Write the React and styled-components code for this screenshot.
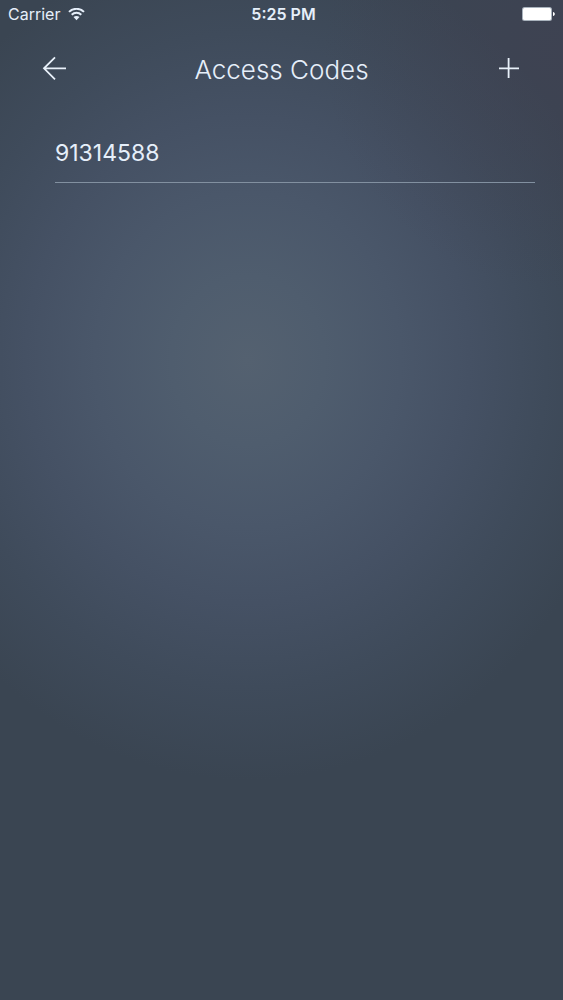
import React from "react";
import styled, { createGlobalStyle } from "styled-components";

const GlobalStyle = createGlobalStyle`
  *, *::before, *::after { box-sizing: border-box; }
  body { margin: 0; background: #3a4552; }
`;

const Screen = styled.div`
  min-height: 100vh;
  color: #e6effa;
  font-family: Inter, "Liberation Sans", sans-serif;
  background:
    radial-gradient(circle at 100% 5%, rgba(66, 64, 82, 0.5), rgba(66, 64, 82, 0) 240px),
    radial-gradient(ellipse 68% 42% at 44% 36%, #546170 0%, #4f5d6e 20%, #4a576a 40%, #455164 58%, #3f4b5b 78%, #3a4552 100%);
`;

const StatusBar = styled.div`
  display: grid;
  grid-template-columns: 1fr auto 1fr;
  align-items: center;
  height: 28px;
  padding: 0 8px;
  font-size: 16px;
  line-height: 20px;
`;

const Network = styled.div`
  display: flex;
  align-items: center;
  gap: 8px;
`;

const Time = styled.time`
  padding-left: 4px;
  font-weight: 600;
`;

const BatterySlot = styled.div`
  display: flex;
  justify-content: flex-end;
`;

const Icon = styled.svg`
  display: block;
  fill: none;
  stroke: currentColor;
  stroke-width: 2;
`;

const NavBar = styled.header`
  display: grid;
  grid-template-columns: 44px 1fr 44px;
  align-items: center;
  height: 80px;
  padding: 0 32px;
`;

const Title = styled.h1`
  margin: 0;
  padding-top: 4px;
  font-size: 26px;
  font-weight: 300;
  line-height: 32px;
  text-align: center;
`;

const IconButton = styled.button`
  display: grid;
  place-items: center;
  width: 44px;
  height: 44px;
  padding: 0;
  border: 0;
  background: none;
  color: #e9f1fa;
  cursor: pointer;
`;

const CodeList = styled.ul`
  margin: 0;
  padding: 16px 28px 0 55px;
  list-style: none;
`;

const CodeRow = styled.li`
  height: 59px;
  padding-top: 13px;
  border-bottom: 1px solid #8290a0;
  font-size: 23px;
  line-height: 32px;
`;

const codes = ["91314588"];

export default function App() {
  return (
    <>
      <GlobalStyle />
      <Screen>
        <StatusBar>
          <Network>
            Carrier
            <Icon width="17" height="13" viewBox="0 0 17 13" role="img" aria-label="Wi-Fi">
              <path d="M1 3.9C5.2-.2 11.8-.2 16 3.9M3.7 6.7c2.7-2.6 6.9-2.6 9.6 0" />
              <path d="M5.5 9.1c1.7-1.6 4.3-1.6 6 0L8.5 12.2z" fill="currentColor" stroke="none" />
            </Icon>
          </Network>
          <Time>5:25 PM</Time>
          <BatterySlot>
            <Icon width="33" height="14" viewBox="0 0 33 14" role="img" aria-label="Battery full">
              <rect x="0" y="0" width="30" height="14" rx="2.5" fill="#a9b3bd" stroke="none" />
              <rect x="1" y="1" width="28" height="12" rx="1.5" fill="#fff" stroke="none" />
              <path d="M31 5c2.4.4 2.4 3.6 0 4z" fill="#fff" stroke="none" />
            </Icon>
          </BatterySlot>
        </StatusBar>
        <NavBar>
          <IconButton aria-label="Back">
            <Icon width="24" height="24" viewBox="0 0 24 24">
              <path d="M24 12.3H2M13 1.3L2 12.3l11 11" strokeWidth="1.8" />
            </Icon>
          </IconButton>
          <Title>Access Codes</Title>
          <IconButton aria-label="Add access code">
            <Icon width="20" height="20" viewBox="0 0 20 20">
              <path d="M0 10.3h20M9.6 0v20" strokeWidth="1.8" />
            </Icon>
          </IconButton>
        </NavBar>
        <main>
          <CodeList>
            {codes.map((code) => (
              <CodeRow key={code}>{code}</CodeRow>
            ))}
          </CodeList>
        </main>
      </Screen>
    </>
  );
}
